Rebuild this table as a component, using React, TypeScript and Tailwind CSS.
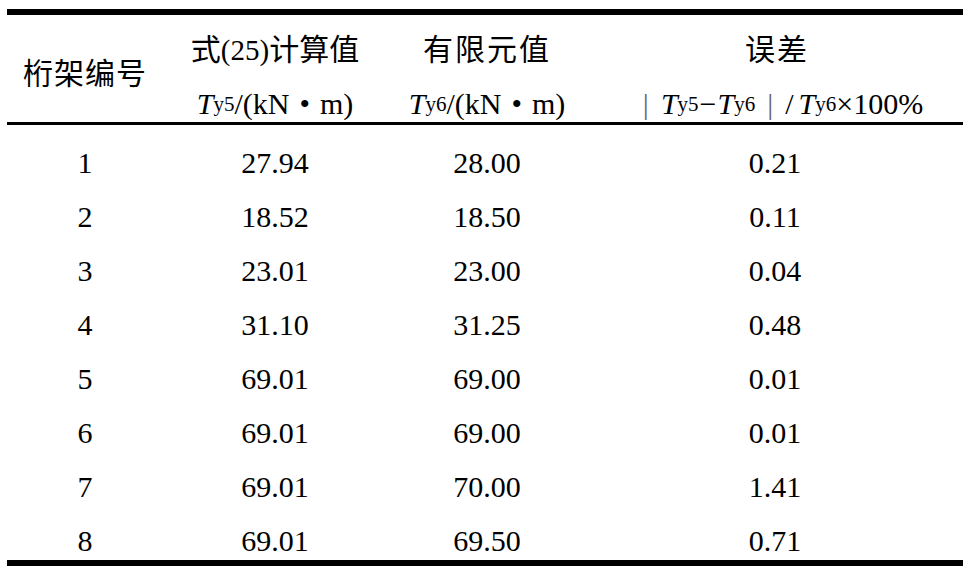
const rows = [
  ["1", "27.94", "28.00", "0.21"],
  ["2", "18.52", "18.50", "0.11"],
  ["3", "23.01", "23.00", "0.04"],
  ["4", "31.10", "31.25", "0.48"],
  ["5", "69.01", "69.00", "0.01"],
  ["6", "69.01", "69.00", "0.01"],
  ["7", "69.01", "70.00", "1.41"],
  ["8", "69.01", "69.50", "0.71"],
];

const cols = "grid grid-cols-[156px_224px_200px_376px]";

function Sub({ t }: { t: string }) {
  return <span className="text-[21px] not-italic align-[-4px]">{t}</span>;
}

function T({ s }: { s: string }) {
  return (
    <>
      <span className="italic">T</span>
      <Sub t={s} />
    </>
  );
}

export default function App() {
  return (
    <div className="w-[978px] h-[576px] bg-white pt-[9px] pl-[7px] text-black font-['Liberation_Serif','Noto_Sans_CJK_SC',serif]">
      <div className="w-[956px] border-t-[6px] border-b-[6px] border-black">
        {/* Header */}
        <div className={`${cols} grid-rows-[30px_30px] gap-y-[24px] pt-[20px] pb-[3px] border-b-[3px] border-black text-[30px] leading-none`}>
          <div className="row-span-2 flex items-center justify-center pb-[6px] tracking-[1px]">
            桁架编号
          </div>
          <div className="flex items-center justify-center">
            式<span className="text-[29px]">(25)</span>计算值
          </div>
          <div className="flex items-center justify-center tracking-[2px]">有限元值</div>
          <div className="flex items-center justify-center tracking-[2px] pl-[4px]">误差</div>
          <div className="flex items-center justify-center whitespace-pre">
            <T s="y5" />/(kN<span className="mx-[10px]">•</span>m)
          </div>
          <div className="flex items-center justify-center whitespace-pre">
            <T s="y6" />/(kN<span className="mx-[10px]">•</span>m)
          </div>
          <div className="flex items-center justify-center whitespace-pre pl-[16px]">
            <span className="mr-[12px] text-[#666]">|</span>
            <T s="y5" />
            <span className="mx-[1px]">−</span>
            <T s="y6" />
            <span className="mx-[12px] text-[#666]">|</span>
            <span className="mr-[5px]">/</span>
            <T s="y6" />×100%
          </div>
        </div>

        {/* Body */}
        <div className="h-[435px] pt-[11px] text-[30px] leading-none">
          {rows.map((r) => (
            <div key={r[0]} className={`${cols} h-[54px] items-center`}>
              {r.map((c, i) => (
                <div key={i} className="text-center">
                  {c}
                </div>
              ))}
            </div>
          ))}
        </div>
      </div>
    </div>
  );
}
